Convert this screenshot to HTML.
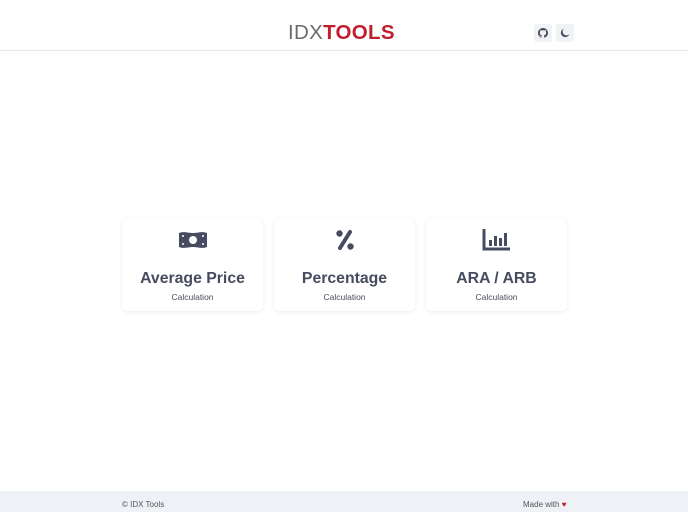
<!DOCTYPE html>
<html><head><style>
*{margin:0;padding:0;box-sizing:border-box}
body{width:688px;height:512px;background:#fff;font-family:"Liberation Sans",sans-serif;color:#4a4e62;position:relative;overflow:hidden}
.hdr{position:absolute;left:0;top:0;width:688px;height:51px;border-bottom:1px solid #e6e8ec}
.logo{position:absolute;left:288px;top:21px;font-size:20.5px;line-height:24px;letter-spacing:0.3px}
.logo .a{color:#6b6b6b;font-weight:300}
.logo .b{color:#c0202e;font-weight:bold}
.btn{position:absolute;top:24px;width:18px;height:18px;background:#f0f2f5;border-radius:3px;display:flex;align-items:center;justify-content:center}
.card{position:absolute;top:218px;width:141px;height:93px;border-radius:5px;box-shadow:0 1px 4px rgba(0,0,0,.08);background:#fff;text-align:center}
.card svg{position:absolute;left:56px;top:10px}
.card h2{position:absolute;top:52px;width:100%;font-size:15.8px;font-weight:bold;color:#474b5f}
.card p{position:absolute;top:74px;width:100%;font-size:8.5px;color:#474b5f}
.ftr{position:absolute;left:0;top:491px;width:688px;height:21px;background:#eef2f6;font-size:8px;color:#555}
</style></head><body>
<div class="hdr">
<div class="logo"><span class="a">IDX</span><span class="b">TOOLS</span></div>
<div class="btn" style="left:534px"><svg width="10" height="10" viewBox="0 0 16 16"><path fill="#474b5f" d="M8 0C3.6 0 0 3.6 0 8c0 3.5 2.3 6.5 5.5 7.6.4.1.5-.2.5-.4v-1.4c-2.2.5-2.7-1-2.7-1-.4-.9-.9-1.2-.9-1.2-.7-.5.1-.5.1-.5.8.1 1.2.8 1.2.8.7 1.2 1.900.9 2.3.7.1-.5.3-.9.5-1.1-1.8-.2-3.6-.9-3.6-4 0-.9.3-1.6.8-2.1-.1-.2-.4-1 .1-2.1 0 0 .7-.2 2.200.8.6-.2 1.3-.3 2-.3s1.4.1 2 .3c1.5-1 2.2-.8 2.2-.8.4 1.1.2 1.9.1 2.1.5.6.8 1.3.8 2.1 0 3.1-1.9 3.7-3.6 3.9.3.3.5.8.5 1.5v2.2c0 .2.1.5.6.4C13.7 14.5 16 11.5 16 8c0-4.4-3.6-8-8-8z"/></svg></div>
<div class="btn" style="left:556px"><svg width="10" height="10" viewBox="0 0 16 16"><path fill="#474b5f" d="M6 1a7 7 0 1 0 9 9A6 6 0 0 1 6 1z"/></svg></div>
</div>
<div class="card" style="left:122px"><svg width="30" height="24" viewBox="0 0 30 24"><path fill="#474b5f" d="M1 5c5-2 9 0 14 0s9-2 14 0v14c-5 2-9 0-14 0S6 21 1 19z"/><circle cx="15" cy="12" r="4" fill="#fff"/><circle cx="5" cy="8" r="1" fill="#fff"/><circle cx="25" cy="16" r="1" fill="#fff"/><circle cx="5" cy="16" r="1" fill="#fff"/><circle cx="25" cy="8" r="1" fill="#fff"/></svg><h2>Average Price</h2><p>Calculation</p></div>
<div class="card" style="left:274px"><svg width="30" height="24" viewBox="0 0 30 24"><circle cx="9.5" cy="5.5" r="3.2" fill="#474b5f"/><circle cx="20.5" cy="18.5" r="3.2" fill="#474b5f"/><path d="M20 4L10 20" stroke="#474b5f" stroke-width="4" stroke-linecap="round"/></svg><h2>Percentage</h2><p>Calculation</p></div>
<div class="card" style="left:426px"><svg width="30" height="24" viewBox="0 0 30 24"><path d="M2 1v20h26" stroke="#474b5f" stroke-width="3" fill="none"/><rect x="7" y="12" width="3" height="6" fill="#474b5f"/><rect x="12" y="8" width="3" height="10" fill="#474b5f"/><rect x="17" y="10" width="3" height="8" fill="#474b5f"/><rect x="22" y="5" width="3" height="13" fill="#474b5f"/></svg><h2>ARA / ARB</h2><p>Calculation</p></div>
<div class="ftr"><span style="position:absolute;left:122px;top:9px">© IDX Tools</span><span style="position:absolute;left:523px;top:9px">Made with <span style="color:#c0202e">♥</span></span></div>
</body></html>
